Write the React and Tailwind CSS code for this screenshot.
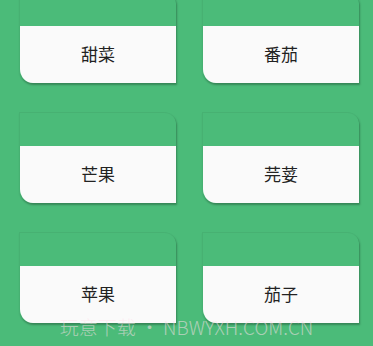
import React from "react";

const items = ["甜菜", "番茄", "芒果", "芫荽", "苹果", "茄子"];

function Card({ name }) {
  return (
    <div className="h-[91px] flex flex-col rounded-tr-[12px] rounded-bl-[14px] overflow-hidden shadow-[1px_2px_2px_rgba(0,0,0,0.28)] border-t border-l border-[rgba(0,0,0,0.05)]">
      <div className="h-[33px]" />
      <div className="flex-1 bg-[#fafafa] flex items-center justify-center text-[17px] text-[#222] pb-[1px]" style={{ fontFamily: '"Noto Sans CJK SC", sans-serif' }}>
        {name}
      </div>
    </div>
  );
}

export default function App() {
  return (
    <div className="relative w-[373px] h-[346px] overflow-hidden bg-[#4bbb79]">
      <div className="grid grid-cols-[157px_157px] gap-x-[26px] gap-y-[29px] pl-[19px] -mt-[8px]">
        {items.map((n) => (
          <Card key={n} name={n} />
        ))}
      </div>
      <div
        className="absolute left-0 right-0 top-[313px] text-center text-[19px] font-light text-[rgba(255,225,235,0.55)] whitespace-nowrap"
        style={{ fontFamily: '"Noto Sans CJK SC", sans-serif' }}
      >
        玩意下载 • NBWYXH.COM.CN
      </div>
    </div>
  );
}
